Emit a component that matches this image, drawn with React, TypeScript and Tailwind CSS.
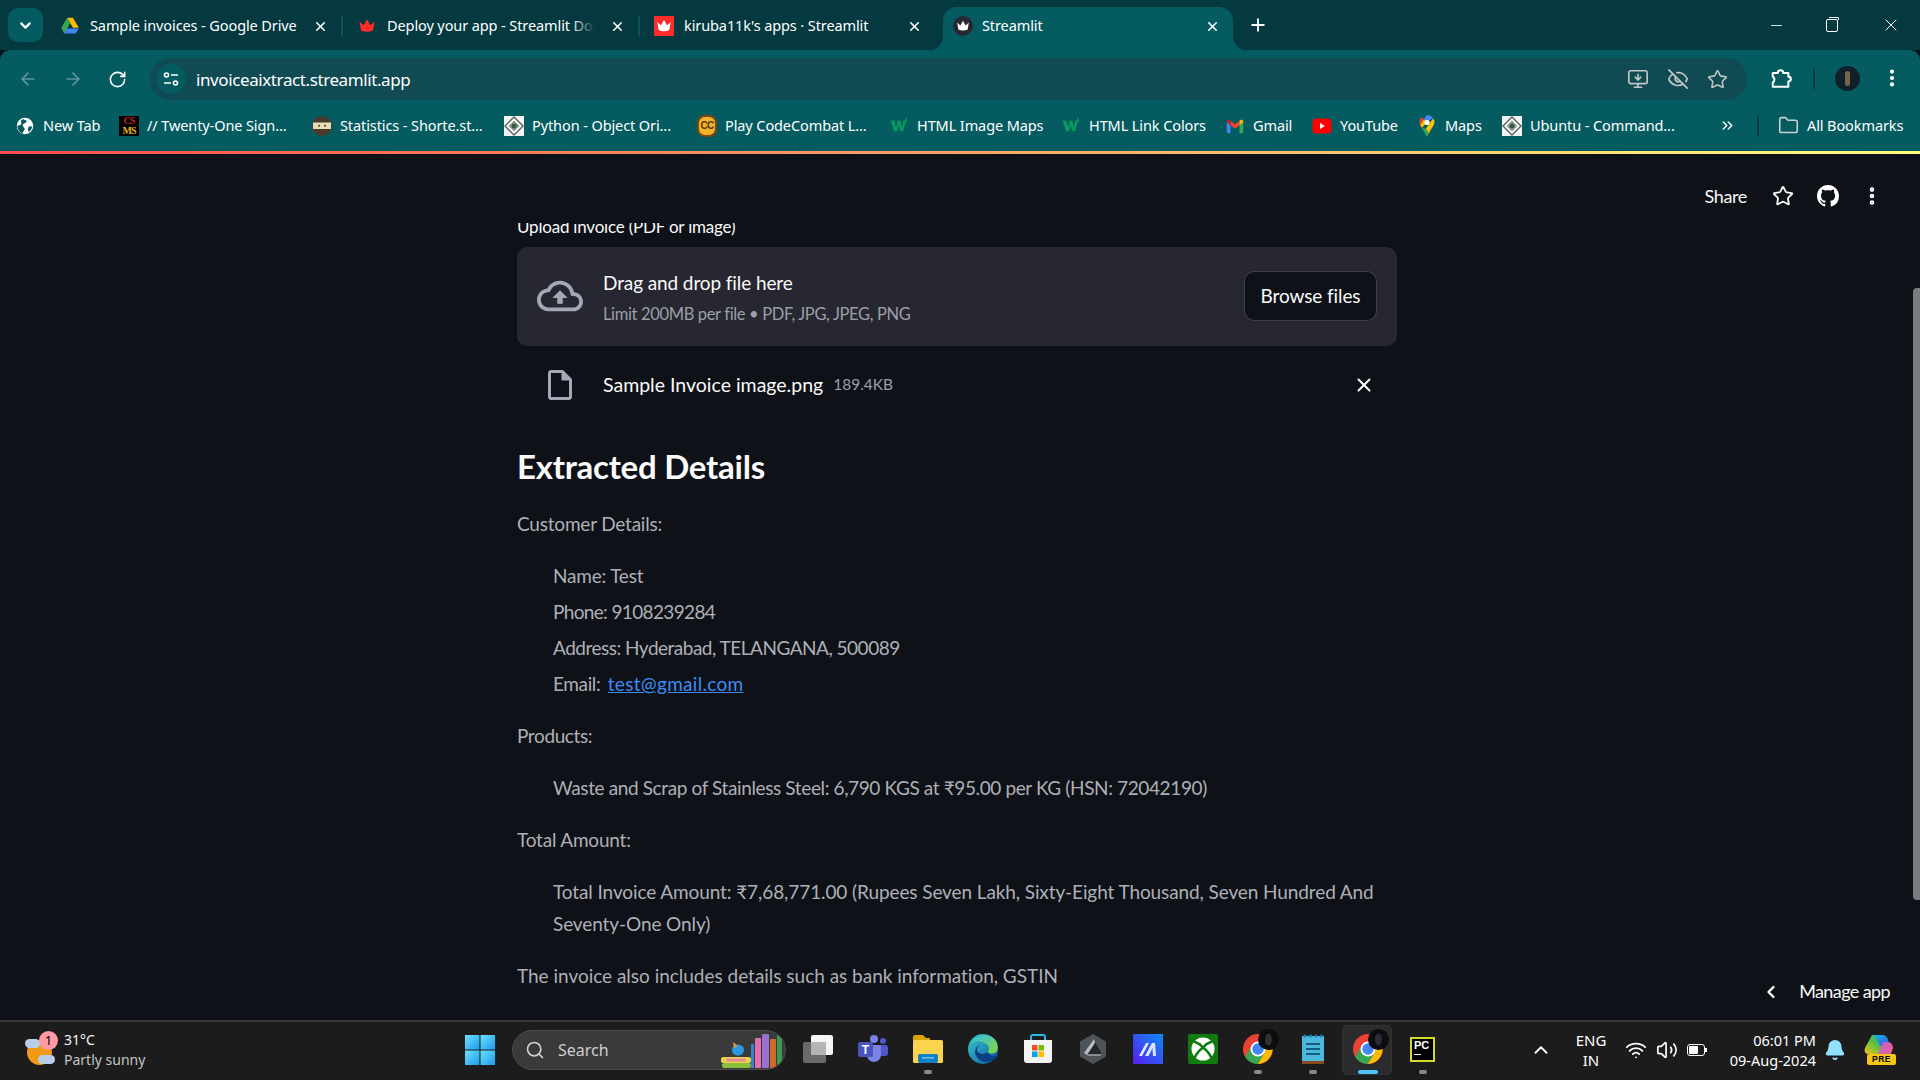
import React from "react";
import { X, Plus, ChevronDown, ChevronLeft, ArrowLeft, ArrowRight, RotateCw, Minus, Star, EllipsisVertical, ChevronsRight, Folder, Search, ChevronUp, Wifi, Volume2, Bell, EyeOff, MonitorDown } from "lucide-react";

const Crown = ({ c = "#ff2b2b", s = 18 }: { c?: string; s?: number }) => (
  <svg width={s} height={s} viewBox="0 0 24 24"><path fill={c} d="M2 6l5.5 5L12 3l4.5 8L22 6l-2 12c-5 2.4-11 2.4-16 0z" /></svg>
);
const Drive = () => (
  <svg width="20" height="20" viewBox="0 0 24 24"><path fill="#fbbc04" d="M8.5 2h7l7 12h-7z" /><path fill="#34a853" d="M8.5 2L1.5 14l3.5 7 7-12z" /><path fill="#4285f4" d="M8 15h14.500l-3.500 6H5z" /></svg>
);
const Globe = () => (
  <svg width="18" height="18" viewBox="0 0 24 24"><circle cx="12" cy="12" r="11" fill="#fff" /><path fill="#045b60" d="M9 2.500c2 1.500 4 1 5 2.500s-1 3-3 3.500-3 2-1.500 4 3 3 1.500 5-2 3-2.500 4.500C4 20 1.500 15 2 11c3 1 6-1 5-4s1-3 2-4.500zM17 13c2-1 4-1 4.500 0-.5 3-2 5.500-4.500 7-1-2-1.500-5 0-7z" /></svg>
);
const Csms = () => (
  <div className="w-5 h-5 bg-black flex flex-col items-center justify-center font-['Liberation_Serif',serif] font-bold text-[10px] leading-[10px] tracking-[-1px]">
    <span className="text-[#c81e1e]">CS</span><span className="text-[#e8b020]">MS</span>
  </div>
);
const Ninja = () => (
  <svg width="20" height="20" viewBox="0 0 20 20"><circle cx="10" cy="10" r="10" fill="#4a3a2c" /><rect x="1" y="6.500" width="18" height="6.500" fill="#e8dcb4" /><circle cx="7" cy="9.700" r="1" fill="#4a3a2c" /><circle cx="13" cy="9.700" r="1" fill="#4a3a2c" /></svg>
);
const Diamond = () => (
  <svg width="20" height="20" viewBox="0 0 20 20"><rect width="20" height="20" fill="#f2f2f2" /><path d="M10 1l9 9-9 9-9-9z" fill="#fff" stroke="#5a6a60" strokeWidth="1.500" /><path d="M10 4.500l5.500 5.500-5.500 5.500L4.500 10z" fill="#8a9a90" /><circle cx="10" cy="10" r="2.500" fill="#3a5a44" /></svg>
);
const CC = () => (
  <div className="w-5 h-[22px] rounded-[8px] bg-[#f0b42c] border-2 border-[#7a4a10] flex items-center justify-center font-['Liberation_Sans',sans-serif] font-bold text-[10px] tracking-[-0.8px] text-[#5a3208]">CC</div>
);
const W3 = () => (
  <svg width="18" height="15" viewBox="0 0 20 18"><path fill="#0a9a60" d="M0 3h4.500l2 8 2-8h3l2 8 1.500-8h3.500l-3.500 13h-3.500l-2-7-2 7H4z" /><path fill="#0a9a60" d="M17 0h3v1l-1 1c1 .5 1 3-1.500 3L17 4.500h1c.6 0 .6-1.500-.5-1.500V2l.8-1H17z" /></svg>
);
const Gmail = () => (
  <svg width="18" height="18" viewBox="0 0 24 24"><path fill="#4285f4" d="M1 6v14a1.500 1.500 0 001.500 1.500H6V11z" /><path fill="#34a853" d="M23 6v14a1.500 1.500 0 01-1.500 1.500H18V11z" /><path fill="#ea4335" d="M6 11V5l6 4.500L18 5v6l-6 4.500z" /><path fill="#c5221f" d="M1 6c0-2.200 2.500-3 4-2l1 1v6L1 7z" /><path fill="#fbbc04" d="M23 6c0-2.200-2.500-3-4-2l-1 1v6l5-4z" /></svg>
);
const YouTube = () => (
  <svg width="20" height="20" viewBox="0 0 20 20"><rect x="0.500" y="2.500" width="19" height="15" rx="4" fill="#f00" /><path fill="#fff" d="M8 7l5 3-5 3z" /></svg>
);
const Pin = () => (
  <svg width="16" height="22" viewBox="0 0 16 22"><path fill="#34a853" d="M3 13l5 9 2-3.500-3-5z" /><path fill="#fbbc04" d="M1 10c.5 1.200 1.200 2 2 3l5-6-3-3z" /><path fill="#4285f4" d="M8 0c2.500 0 4.500 1.200 6 3L8 7 5 4z" /><path fill="#ea4335" d="M2 2.500C.5 4 0 7 1 10l4-6z" /><path fill="#ffc107" d="M15 5c1.500 3-1 6.500-2.500 8.500C11 15.500 10.500 17 10 18.500L7 13.500l7-10z" /><circle cx="8" cy="7.500" r="2.600" fill="#fff" /></svg>
);

const Win = () => (
  <svg width="30" height="30" viewBox="0 0 30 30"><defs><linearGradient id="w" x1="0" y1="0" x2="1" y2="1"><stop stopColor="#6fe0fb" /><stop offset="1" stopColor="#1a9cf0" /></linearGradient></defs><rect x="0" y="0" width="14.500" height="14.500" fill="url(#w)" /><rect x="15.500" y="0" width="14.500" height="14.500" fill="url(#w)" /><rect x="0" y="15.500" width="14.500" height="14.500" fill="url(#w)" /><rect x="15.500" y="15.500" width="14.500" height="14.500" fill="url(#w)" /></svg>
);
const Books = () => (
  <svg width="62" height="36" viewBox="0 0 62 36"><rect x="0" y="25" width="30" height="6" rx="2" fill="#e8d44a" /><rect x="5" y="26.500" width="20" height="3" rx="1.500" fill="#e88a9a" /><rect x="1" y="31" width="29" height="5" rx="2" fill="#8abf3a" /><ellipse cx="17" cy="18" rx="6" ry="5.500" fill="#2a9ae0" /><path d="M12 10l5 4-4 2z" fill="#d0a040" /><rect x="30" y="12" width="3" height="24" fill="#3a80d0" /><rect x="34" y="6" width="6" height="30" rx="1" fill="#e070b0" /><rect x="41" y="2" width="7" height="34" rx="1" fill="#9a70d0" /><rect x="49" y="7" width="6" height="29" rx="1" fill="#d06a30" /><rect x="56" y="2" width="5" height="32" rx="2" fill="#3a9a50" /></svg>
);
const TaskView = () => (
  <svg width="30" height="30" viewBox="0 0 30 30"><rect x="0" y="8" width="23" height="21" rx="2" fill="#6a6a6a" /><rect x="8" y="1" width="22" height="20" rx="2" fill="#f4f4f4" /><rect x="8" y="8" width="15" height="13" rx="1" fill="#b5b5b5" /></svg>
);
const Teams = () => (
  <svg width="30" height="30" viewBox="0 0 30 30"><circle cx="25" cy="7" r="3" fill="#5059c9" /><rect x="20" y="11" width="10" height="11" rx="3" fill="#5059c9" /><circle cx="16" cy="5" r="4" fill="#7b83eb" /><path d="M9 11h14v10a7 7 0 01-14 0z" fill="#7b83eb" /><rect x="0" y="8" width="15" height="15" rx="2" fill="#4b53bc" /><text x="7.500" y="20" textAnchor="middle" fontSize="12" fontWeight="700" fontFamily="Liberation Sans, sans-serif" fill="#fff">T</text></svg>
);
const Explorer = () => (
  <svg width="30" height="28" viewBox="0 0 30 28"><path d="M0 2a2 2 0 012-2h8l3 3h4v3H0z" fill="#d9a300" /><rect x="0" y="5" width="30" height="23" rx="1.500" fill="#fcd34d" /><rect x="5" y="19" width="20" height="9" rx="2" fill="#0f7fc8" /><rect x="9" y="22" width="12" height="1.500" fill="#6ec3f0" /></svg>
);
const Edge = () => (
  <svg width="30" height="30" viewBox="0 0 30 30"><defs><linearGradient id="e1" x1="0" y1="0" x2="1" y2="1"><stop stopColor="#38c9c9" /><stop offset="1" stopColor="#0c59a4" /></linearGradient><linearGradient id="e2" x1="0" y1="0" x2="1" y2="1"><stop stopColor="#35c1f1" /><stop offset="1" stopColor="#86d633" /></linearGradient></defs><circle cx="15" cy="15" r="15" fill="url(#e1)" /><path d="M3 10C6 2 16 -1 24 3c5 3 7 9 5 14-2 3-8 3-9 1 2-3 1-7-3-9-6-3-11-2-14 1z" fill="url(#e2)" /><path d="M19 18c-2 2-6 3-9 0-2-2-1-5 2-7-4 1-5 5-5 8 1 5 6 9 11 9 6 0 11-4 13-8-3 2-9 3-12-2z" fill="#0b3f85" /></svg>
);
const Store = () => (
  <svg width="30" height="30" viewBox="0 0 30 30"><path d="M8 6V3a2 2 0 012-2h10a2 2 0 012 2v3" fill="none" stroke="#29b6e8" strokeWidth="2" /><path d="M1 6h28v20a3 3 0 01-3 3H4a3 3 0 01-3-3z" fill="#f4f4f4" /><rect x="9" y="11" width="5.500" height="5.500" fill="#f25022" /><rect x="15.500" y="11" width="5.500" height="5.500" fill="#7fba00" /><rect x="9" y="17.500" width="5.500" height="5.500" fill="#00a4ef" /><rect x="15.500" y="17.500" width="5.500" height="5.500" fill="#ffb900" /></svg>
);
const Hex = () => (
  <svg width="28" height="30" viewBox="0 0 28 30"><path d="M14 0l13 7.500v15L14 30 1 22.500v-15z" fill="#4e5358" /><path d="M16 8l7 12H8z" fill="#24272a" /><path d="M15 5L5 19l3 2 8-12z" fill="#b8bcc0" /><path d="M8 20h15l-2 2H9z" fill="#8a8e92" /></svg>
);
const Ms = () => (
  <svg width="30" height="30" viewBox="0 0 30 30"><defs><linearGradient id="m" x1="0" y1="1" x2="1" y2="0"><stop stopColor="#5a1ef0" /><stop offset="1" stopColor="#0a8cf5" /></linearGradient></defs><rect width="30" height="30" fill="url(#m)" /><path d="M6 22L13 9h3L9 22zM12 22L19 9h3l1 13h-3l-.5-8-4 8z" fill="#dfe6ff" /></svg>
);
const Xbox = () => (
  <svg width="30" height="30" viewBox="0 0 30 30"><rect width="30" height="30" rx="2" fill="#107c10" /><circle cx="15" cy="15" r="11.500" fill="#fff" /><path d="M5 7Q11 9 15 13.500Q19 9 25 7M6 25Q9 18 15 13.500Q21 18 24 25" fill="none" stroke="#107c10" strokeWidth="2.600" /></svg>
);
const Chrome = ({ av }: { av: string }) => (
  <div className="relative w-[30px] h-[30px]">
    <svg width="30" height="30" viewBox="0 0 30 30"><circle cx="15" cy="15" r="15" fill="#ea4335" /><path d="M15 15L2 22.500A15 15 0 0015 30l7.500-13z" fill="#34a853" /><path d="M15 8.500h13A15 15 0 0115 30l6.500-11z" fill="#fbbc04" /><path d="M15 15L2 22.500 8 13z" fill="#34a853" /><circle cx="15" cy="15" r="7.500" fill="#fff" /><circle cx="15" cy="15" r="5.700" fill="#4285f4" /></svg>
    <svg className="absolute -top-[5px] left-[15px]" width="21" height="21" viewBox="0 0 21 21"><circle cx="10.500" cy="10.500" r="10.500" fill="#0b0d10" /><ellipse cx="10.500" cy="10.500" rx="3.500" ry="6" fill={av} /></svg>
  </div>
);
const Notepad = () => (
  <svg width="24" height="30" viewBox="0 0 24 30"><rect x="1" y="2" width="22" height="26" fill="#4cb8dc" /><rect x="1" y="27" width="22" height="3" fill="#8a4a20" /><rect x="5" y="9" width="14" height="2" fill="#155a80" /><rect x="5" y="14" width="14" height="2" fill="#155a80" /><rect x="5" y="19" width="14" height="2" fill="#155a80" /><circle cx="4" cy="2" r="1.500" fill="#1a80a8" /><circle cx="9.500" cy="2" r="1.500" fill="#1a80a8" /><circle cx="15" cy="2" r="1.500" fill="#1a80a8" /><circle cx="20.500" cy="2" r="1.500" fill="#1a80a8" /></svg>
);
const PyCharm = () => (
  <div className="w-[25px] h-[25px] bg-black border-[2px] border-[#d6d92c] flex flex-col pl-[2px] font-['Liberation_Sans',sans-serif] font-bold text-[11px] leading-[13px] text-white">
    <span>PC</span><span className="w-[7px] h-[1.500px] bg-white mt-[2px]" />
  </div>
);
const Copilot = () => (
  <div className="relative w-[30px] h-[30px]">
    <svg width="30" height="24" viewBox="0 0 30 24"><defs><linearGradient id="c1" x1="0" y1="0" x2="1" y2="1"><stop stopColor="#19b5e8" /><stop offset="1" stopColor="#2f55e0" /></linearGradient><linearGradient id="c2" x1="0" y1="1" x2="1" y2="0"><stop stopColor="#f8c020" /><stop offset=".5" stopColor="#58c040" /><stop offset="1" stopColor="#1fb0c0" /></linearGradient><linearGradient id="c3" x1="0" y1="0" x2="1" y2="1"><stop stopColor="#c060e0" /><stop offset="1" stopColor="#f06080" /></linearGradient></defs><path d="M8 0h10c3 0 5 2 6 5l-8 14H4C1 19 0 16 1 13z" fill="url(#c2)" /><path d="M10 0h8c3 0 5 2 6 5l2 6H16z" fill="url(#c1)" /><path d="M19 7h5c3 0 5 3 5 6l-2 6c-1 2-3 3-5 3h-9z" fill="url(#c3)" /></svg>
    <div className="absolute left-[3px] top-[19px] w-[29px] h-[11px] rounded-[2px] bg-[#f5c518] text-[8.500px] leading-[11px] font-bold text-black text-center font-['Liberation_Sans',sans-serif] tracking-[0.5px]">PRE</div>
  </div>
);

const tabs = [
  { t: "Sample invoices - Google Drive", icon: <Drive />, fade: false },
  { t: "Deploy your app - Streamlit Docs", icon: <Crown />, fade: true },
  { t: "kiruba11k's apps · Streamlit", icon: <div className="w-5 h-5 bg-[#ff2b2b] flex items-center justify-center"><Crown c="#fff" s={16} /></div>, fade: false },
];

const Tab = ({ t, icon, last, fade }: { t: string; icon: React.ReactNode; last: boolean; fade: boolean }) => (
  <div className="relative w-[297px] h-[38px] flex items-center pl-[14px] pr-[15px] text-white">
    <div className="w-5 flex justify-center shrink-0">{icon}</div>
    <div className="relative ml-[10px] w-[208px] overflow-hidden whitespace-nowrap">
      {t}
      {fade && <div className="absolute right-0 top-0 bottom-0 w-[24px] bg-[linear-gradient(90deg,transparent,#03393f)]" />}
    </div>
    <X className="ml-auto" size={15} strokeWidth={2.500} />
    {!last && <div className="absolute right-0 top-[9px] w-[2px] h-[20px] bg-[#0c545a]" />}
  </div>
);

const bookmarks: { t: string; icon: React.ReactNode; w: string }[] = [
  { t: "New Tab", icon: <Globe />, w: "w-[104px]" },
  { t: "// Twenty-One Sign...", icon: <Csms />, w: "w-[193px]" },
  { t: "Statistics - Shorte.st...", icon: <Ninja />, w: "w-[192px]" },
  { t: "Python - Object Ori...", icon: <Diamond />, w: "w-[193px]" },
  { t: "Play CodeCombat L...", icon: <CC />, w: "w-[192px]" },
  { t: "HTML Image Maps", icon: <W3 />, w: "w-[172px]" },
  { t: "HTML Link Colors", icon: <W3 />, w: "w-[164px]" },
  { t: "Gmail", icon: <Gmail />, w: "w-[87px]" },
  { t: "YouTube", icon: <YouTube />, w: "w-[105px]" },
  { t: "Maps", icon: <Pin />, w: "w-[85px]" },
  { t: "Ubuntu - Command...", icon: <Diamond />, w: "w-[190px]" },
];

const apps: { i: React.ReactNode; dot?: boolean; active?: boolean }[] = [
  { i: <TaskView /> },
  { i: <Teams /> },
  { i: <Explorer />, dot: true },
  { i: <Edge /> },
  { i: <Store /> },
  { i: <Hex /> },
  { i: <Ms /> },
  { i: <Xbox /> },
  { i: <Chrome av="#30302c" />, dot: true },
  { i: <Notepad />, dot: true },
  { i: <Chrome av="#2c2a3a" />, dot: true, active: true },
  { i: <PyCharm />, dot: true },
];

const Line = ({ children, cls = "" }: { children: React.ReactNode; cls?: string }) => (
  <p className={`leading-[32px] ${cls}`}>{children}</p>
);
const Li = ({ children, cls = "" }: { children: React.ReactNode; cls?: string }) => (
  <li className={`leading-[32px] mb-1 ${cls}`}>{children}</li>
);

export default function App() {
  return (
    <div className="w-[1920px] h-[1080px] flex flex-col overflow-hidden bg-[#0e1117] font-['Noto_Sans',sans-serif]">
      {/* Tab strip */}
      <div className="h-[50px] bg-[#03393f] flex items-start shrink-0 text-[14.500px] tracking-[-0.1px]">
        <div className="ml-[8px] mt-[8px] w-[35px] h-[34px] rounded-[10px] bg-[#045b60] flex items-center justify-center text-white shrink-0">
          <ChevronDown size={17} strokeWidth={3} />
        </div>
        <div className="ml-[3px] mt-[7px] flex">
          {tabs.map((x, i) => <Tab key={x.t} t={x.t} icon={x.icon} fade={x.fade} last={i === 2} />)}
        </div>
        <div className="relative mt-[7px] ml-[6px] w-[290px] h-[43px] bg-[#045b60] rounded-t-[14px] flex items-center pl-[10px] pr-[13px] text-white">
          <div className="absolute -left-[14px] bottom-0 w-[14px] h-[14px] bg-[radial-gradient(circle_at_0_0,#03393f_14px,#045b60_14.500px)]" />
          <div className="absolute -right-[14px] bottom-0 w-[14px] h-[14px] bg-[radial-gradient(circle_at_100%_0,#03393f_14px,#045b60_14.500px)]" />
          <div className="w-[20px] h-[20px] mb-[5px] rounded-full bg-[#262730] flex items-center justify-center shrink-0"><Crown c="#fff" s={14} /></div>
          <span className="ml-[9px] mb-[5px]">Streamlit</span>
          <X className="ml-auto mb-[5px]" size={15} strokeWidth={2.500} />
        </div>
        <Plus className="ml-[15px] mt-[15px] text-white" size={20} strokeWidth={2.200} />
        <div className="ml-auto flex items-center h-[50px] text-white">
          <Minus size={17} strokeWidth={1.200} className="mr-[41px]" />
          <div className="relative w-[12px] h-[13px] mr-[43px] border border-white rounded-[2px]"><div className="absolute -top-[3px] left-[2px] w-[10px] h-[3px] border-t border-r border-white rounded-tr-[2px]" /></div>
          <X size={20} strokeWidth={1.200} className="mr-[19px]" />
        </div>
      </div>

      {/* Toolbar */}
      <div className="h-[50px] bg-[#045b60] rounded-t-[10px] shrink-0 flex items-start pt-[8px] relative">
        <ArrowLeft className="ml-[18px] mt-[11px] text-[#5f9498]" size={20} strokeWidth={2} />
        <ArrowRight className="ml-[25px] mt-[11px] text-[#5f9498]" size={20} strokeWidth={2} />
        <RotateCw className="ml-[25px] mt-[12px] text-white" size={19} strokeWidth={2} />
        <div className="ml-[23px] w-[1597px] h-[42px] rounded-full bg-[#104a52] flex items-center text-white">
          <div className="ml-[6px] w-[30px] h-[30px] rounded-full bg-[#045b60] flex items-center justify-center">
            <svg width="18" height="18" viewBox="0 0 18 18" fill="none" stroke="#fff" strokeWidth="1.600"><circle cx="4.500" cy="5" r="2" /><path d="M9 5h7M2 13h7" /><circle cx="13.500" cy="13" r="2" /></svg>
          </div>
          <span className="ml-[10px] text-[17px] tracking-[-0.4px] pt-[2px]">invoiceaixtract.streamlit.app</span>
          <div className="ml-auto flex items-center mr-[19px] text-[#c2c8c8]">
            <MonitorDown size={22} strokeWidth={1.800} />
            <EyeOff className="ml-[18px]" size={22} strokeWidth={1.800} />
            <Star className="ml-[18px]" size={21} strokeWidth={1.800} />
          </div>
        </div>
        <svg className="ml-[23px] mt-[9px]" width="22" height="22" viewBox="0 0 24 24" fill="none" stroke="#fff" strokeWidth="2.200" strokeLinejoin="round"><path d="M3 6.500H8.500a3 3 0 0 1 6 0H20V10.500a2.700 2.700 0 0 1 0 5.400V21.500H3V17a3.800 3.800 0 0 0 0-6.500Z" /></svg>
        <div className="ml-[21px] mt-[11px] w-[2px] h-[20px] bg-[#033d42]" />
        <div className="ml-[20px] mt-[8px] w-[25px] h-[25px] rounded-full bg-[#10202a] flex items-center justify-center"><div className="w-[5px] h-[15px] rounded-full bg-[#7a6248]" /></div>
        <EllipsisVertical className="ml-[21px] mt-[9px] text-white" size={22} strokeWidth={2.600} />
      </div>

      {/* Bookmarks */}
      <div className="h-[51px] bg-[#045b60] shrink-0 flex items-center pl-[15px] text-white text-[14.500px] tracking-[-0.1px]">
        {bookmarks.map((b) => (
          <div key={b.t} className={`${b.w} flex items-center shrink-0`}>
            <div className="w-5 flex justify-center shrink-0">{b.icon}</div>
            <span className="ml-[8px] whitespace-nowrap">{b.t}</span>
          </div>
        ))}
        <ChevronsRight className="ml-[27px]" size={17} strokeWidth={2} />
        <div className="ml-[21px] w-[2px] h-[20px] bg-[#033d42]" />
        <Folder className="ml-[19px] text-[#c9d2d2]" size={21} strokeWidth={1.800} />
        <span className="ml-[8px] whitespace-nowrap">All Bookmarks</span>
      </div>

      {/* Streamlit header stripe */}
      <div className="h-[3px] shrink-0 bg-[linear-gradient(90deg,#ff4b4b,#fffd80)]" />

      {/* Page */}
      <main className="flex-1 relative flex flex-col overflow-hidden bg-[#0e1117] font-['Lato',sans-serif] text-[19px] tracking-[-0.38px] text-[#aeb0b6] min-h-0">
        <header className="h-[69px] shrink-0 flex items-start justify-end pt-[29px] text-[#fafafa]">
          <span className="text-[18px] mr-[25px]">Share</span>
          <Star className="mr-[23px] mt-[2px]" size={22} strokeWidth={2} />
          <svg className="mr-[22px] mt-[2px]" width="22" height="22" viewBox="0 0 16 16" fill="#fff"><path d="M8 0C3.58 0 0 3.58 0 8c0 3.54 2.29 6.53 5.47 7.59.4.07.55-.17.55-.38 0-.19-.01-.82-.01-1.49-2.01.37-2.53-.49-2.69-.94-.09-.23-.48-.94-.82-1.13-.28-.15-.68-.52-.01-.53.63-.01 1.08.58 1.23.82.72 1.21 1.87.87 2.33.66.07-.52.28-.87.51-1.07-1.78-.2-3.64-.89-3.64-3.95 0-.87.31-1.59.82-2.15-.08-.2-.36-1.02.08-2.12 0 0 .67-.21 2.2.82.64-.18 1.32-.27 2-.27.68 0 1.36.09 2 .27 1.53-1.04 2.2-.82 2.2-.82.44 1.1.16 1.92.08 2.12.51.56.82 1.27.82 2.15 0 3.07-1.87 3.75-3.65 3.95.29.25.54.73.54 1.48 0 1.07-.01 1.93-.01 2.2 0 .21.15.46.55.38A8.013 8.013 0 0016 8c0-4.42-3.58-8-8-8z" /></svg>
          <EllipsisVertical className="mr-[37px] mt-[2px]" size={22} strokeWidth={3} />
        </header>
        <div className="flex-1 overflow-hidden min-h-0 w-[1914px]">
          <div className="w-[880px] mx-auto">
            <div className="-mt-[7px] h-[22px] leading-[22px] text-[17px] text-[#fafafa] mb-[9px] tracking-[-0.2px]">Upload invoice (PDF or image)</div>
            <div className="h-[99px] rounded-[10px] bg-[#262730] flex items-center pl-[20px] pr-[20px]">
              <svg className="-mt-[2px]" width="46" height="46" viewBox="0 0 24 24" fill="#a3a8b8"><path d="M19.35 10.04C18.67 6.59 15.64 4 12 4 9.11 4 6.6 5.64 5.35 8.04 2.34 8.36 0 10.91 0 14c0 3.31 2.69 6 6 6h13c2.76 0 5-2.24 5-5 0-2.64-2.05-4.78-4.65-4.96zM19 18H6c-2.21 0-4-1.79-4-4 0-2.05 1.53-3.76 3.56-3.97l1.07-.11.5-.95C8.08 7.14 9.94 6 12 6c2.62 0 4.88 1.86 5.39 4.43l.3 1.5 1.53.11c1.56.1 2.78 1.41 2.78 2.96 0 1.65-1.35 3-3 3zM8 13h2.55v3h2.9v-3H16l-4-4z" /></svg>
              <div className="ml-[20px] pt-[2px] flex flex-col">
                <span className="text-[19px] tracking-[-0.1px] leading-[32px] text-[#fafafa]">Drag and drop file here</span>
                <span className="text-[16.500px] tracking-[-0.35px] leading-[28px] pt-[1px] text-[#9c9fa8]">Limit 200MB per file • PDF, JPG, JPEG, PNG</span>
              </div>
              <button className="ml-auto w-[133px] h-[50px] -mt-[1px] rounded-[10px] bg-[#0e1117] border border-[#ffffff33] text-[19px] tracking-[-0.1px] text-[#fafafa]">Browse files</button>
            </div>
            <div className="mt-[14px] h-[50px] flex items-center pl-[25px] pr-[22px]">
              <svg width="36" height="36" viewBox="0 0 24 24" fill="#a3a8b8"><path d="M14 2H6c-1.1 0-1.99.9-1.99 2L4 20c0 1.1.89 2 1.99 2H18c1.1 0 2-.9 2-2V8l-6-6zM6 20V4h7v5h5v11H6z" /></svg>
              <span className="ml-[25px] text-[19.500px] tracking-normal text-[#fafafa]">Sample Invoice image.png</span>
              <span className="ml-[10px] text-[15.500px] tracking-normal text-[#9c9fa8]">189.4KB</span>
              <X className="ml-auto text-[#fafafa]" size={22} strokeWidth={2.200} />
            </div>
            <h2 className="mt-[31px] h-[50px] leading-[50px] text-[33px] tracking-[-0.25px] font-bold text-[#fafafa]">Extracted Details</h2>
            <div className="mt-[17px]">
              <Line cls="mb-5 tracking-[-0.2px]">Customer Details:</Line>
              <ul className="pl-[36px] mb-5">
                <Li cls="tracking-[-0.2px]">Name: Test</Li>
                <Li cls="tracking-[-0.65px]">Phone: 9108239284</Li>
                <Li cls="tracking-[-0.5px]">Address: Hyderabad, TELANGANA, 500089</Li>
                <Li>Email: <a className="ml-[3px] text-[#3d8cf5] underline tracking-[0.3px]">test@gmail.com</a></Li>
              </ul>
              <Line cls="mb-5">Products:</Line>
              <ul className="pl-[36px] mb-5">
                <Li>Waste and Scrap of Stainless Steel: 6,790 KGS at ₹95.00 per KG (HSN: 72042190)</Li>
              </ul>
              <Line cls="mb-5 tracking-[-0.2px]">Total Amount:</Line>
              <ul className="pl-[36px] mb-5">
                <Li cls="tracking-[-0.1px]">Total Invoice Amount: ₹7,68,771.00 (Rupees Seven Lakh, Sixty-Eight Thousand, Seven Hundred And Seventy-One Only)</Li>
              </ul>
              <Line cls="mb-5 tracking-[-0.02px]">The invoice also includes details such as bank information, GSTIN</Line>
            </div>
          </div>
        </div>
        <div className="absolute right-[30px] bottom-[15px] flex items-center text-[18px] tracking-[-0.6px] text-[#fafafa] bg-[#0e1117]">
          <ChevronLeft size={20} strokeWidth={2.800} className="mr-[18px]" />
          <span>Manage app</span>
        </div>
        <div className="absolute right-0 top-[134px] w-[7px] h-[612px] rounded-l-[4px] bg-[#7a7c80]" />
      </main>

      {/* Taskbar */}
      <footer className="h-[60px] shrink-0 bg-[#1c1c1c] border-t-2 border-[#3a3a3a] pb-[2px] flex items-center text-white text-[14px]">
        <div className="w-[452px] flex items-center pl-[25px] shrink-0">
          <div className="relative w-[34px] h-[34px]">
            <div className="absolute left-[2px] top-[7px] w-[25px] h-[25px] rounded-full bg-[#f09a1a]" />
            <div className="absolute left-0 top-[6px] w-[15px] h-[9px] rounded-full bg-[#b8cfe8]" />
            <div className="absolute left-[13px] top-[22px] w-[17px] h-[9px] rounded-full bg-[#b8cfe8]" />
            <div className="absolute left-[14px] -top-[2px] w-[19px] h-[19px] rounded-full bg-[#ff99a4] text-black text-[13px] leading-[19px] text-center">1</div>
          </div>
          <div className="ml-[5px] flex flex-col leading-[20px]">
            <span className="text-[#f4f4f4]">31°C</span>
            <span className="text-[#c4c4c4]">Partly sunny</span>
          </div>
        </div>
        <div className="w-[56px] flex justify-center shrink-0"><Win /></div>
        <div className="ml-[4px] w-[274px] h-[40px] rounded-full bg-[#3a3a3a] border border-[#4a4a4a] flex items-center relative text-[#cfcfcf] text-[16px] shrink-0 overflow-hidden">
          <Search className="ml-[12px]" size={20} strokeWidth={2} />
          <span className="ml-[13px]">Search</span>
          <div className="absolute right-[2px] top-[1px]"><Books /></div>
        </div>
        <div className="ml-[4px] flex shrink-0">
          {apps.map((a, i) => (
            <div key={i} className="relative w-[55px] h-[58px] pb-[2px] flex items-center justify-center">
              {a.active && <div className="absolute left-[2px] right-[3px] top-[4px] bottom-[4px] rounded-[5px] bg-[#2b2b2b] border border-[#333]" />}
              <div className="relative">{a.i}</div>
              {a.dot && <div className={`absolute bottom-[5px] left-1/2 -translate-x-1/2 h-[4px] rounded-full ${a.active ? "w-[20px] bg-[#4cc2ff]" : "w-[8px] bg-[#8a8a8a]"}`} />}
            </div>
          ))}
        </div>
        <ChevronUp className="ml-[80px]" size={22} strokeWidth={2} />
        <div className="ml-[15px] w-[48px] flex flex-col items-center leading-[20px] text-[15px]"><span>ENG</span><span>IN</span></div>
        <Wifi className="ml-[10px]" size={22} strokeWidth={2} />
        <Volume2 className="ml-[9px]" size={22} strokeWidth={1.800} />
        <div className="ml-[9px] relative w-[18px] h-[12px] border border-white rounded-[3px] p-[1px]"><div className="w-[9px] h-full bg-white rounded-[1px]" /><div className="absolute -right-[3px] top-[3px] w-[2px] h-[4px] bg-white" /></div>
        <div className="ml-[14px] w-[97px] flex flex-col items-end leading-[20px] text-[14.500px] whitespace-nowrap"><span>06:01 PM</span><span>09-Aug-2024</span></div>
        <Bell className="ml-[8px] text-[#8fe3ff] fill-[#8fe3ff]" size={22} />
        <div className="ml-[18px]"><Copilot /></div>
      </footer>
    </div>
  );
}
